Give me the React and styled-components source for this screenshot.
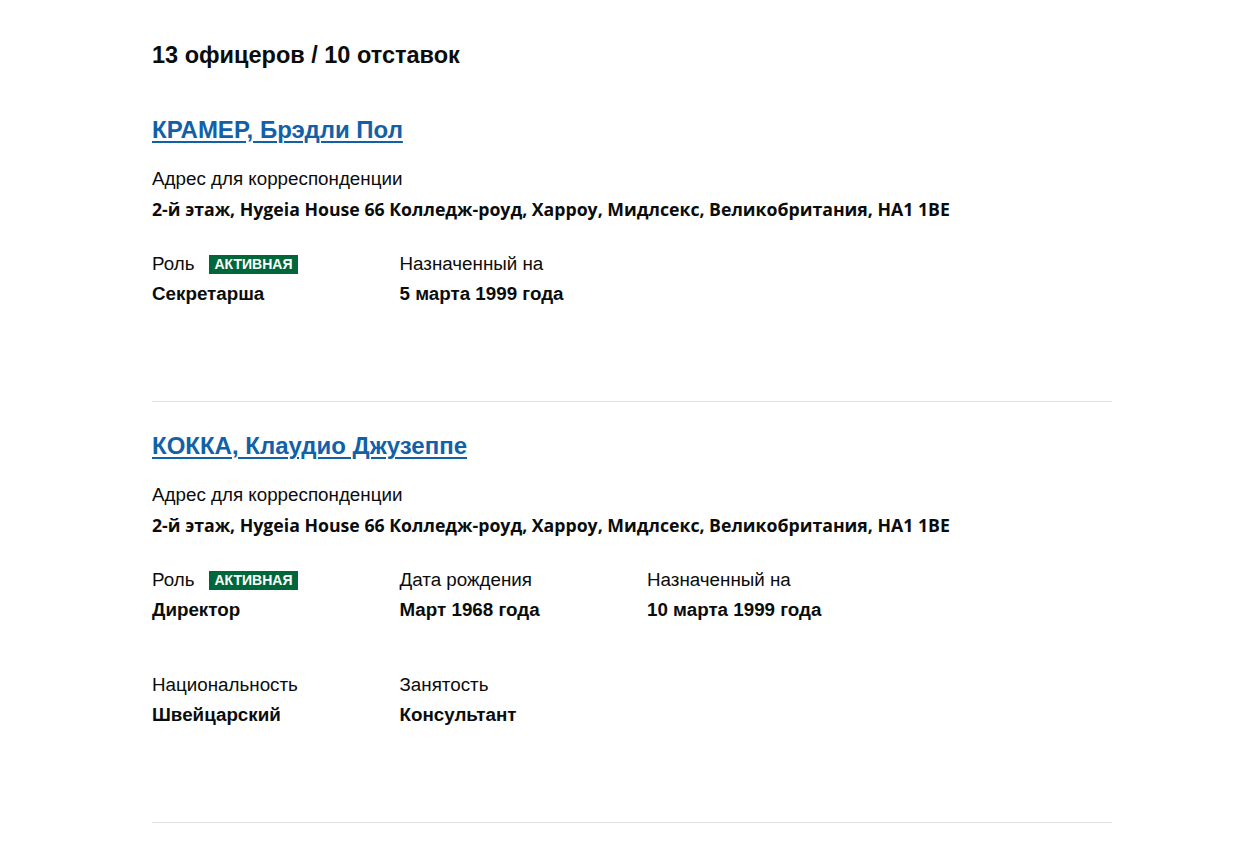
import React from 'react';
import styled, { createGlobalStyle } from 'styled-components';

const GlobalStyle = createGlobalStyle`
  body {
    margin: 0;
    background: #fff;
    color: #0b0c0c;
    font-family: "Liberation Sans", Arial, sans-serif;
  }
`;

const Page = styled.main`
  width: 960px;
  padding: 40px 0 0 152px;
`;

const Heading = styled.h2`
  margin: 0 0 45px;
  font-family: "Liberation Sans", Arial, sans-serif;
  font-size: 23.5px;
  font-weight: 700;
  line-height: 30px;
`;

const Officer = styled.section`
  padding-bottom: ${props => props.pad}px;
  border-bottom: 1px solid #e0e0e0;
  margin-bottom: 29px;
`;

const Name = styled.a`
  display: block;
  margin: 0 0 22px;
  font-size: 24px;
  font-weight: 700;
  line-height: 30px;
  color: #1261a8;
  text-decoration: underline;
  text-underline-offset: 3px;
  text-decoration-thickness: 2px;
`;

const Label = styled.div`
  display: flex;
  align-items: center;
  gap: 15px;
  font-size: 18.8px;
  line-height: 24px;
  color: #0b0c0c;
`;

const Value = styled.div`
  margin-top: 6px;
  font-size: 18.8px;
  font-weight: 700;
  line-height: 24px;
`;

const Address = styled(Value)`
  font-family: "Open Sans", "Liberation Sans", sans-serif;
  font-size: 17.7px;
`;

const Block = styled.div`
  margin-bottom: 31px;
`;

const Grid = styled.div`
  display: grid;
  grid-template-columns: repeat(3, 247.5px);
  row-gap: 51px;
`;

const Badge = styled.span`
  display: inline-block;
  background: #00673a;
  color: #fff;
  font-size: 14px;
  font-weight: 700;
  line-height: 19px;
  padding: 0 5px;
`;

const Field = ({ label, value, badge }) => (
  <div>
    <Label>
      {label}
      {badge && <Badge>{badge}</Badge>}
    </Label>
    <Value>{value}</Value>
  </div>
);

const ADDRESS = '2-й этаж, Hygeia House 66 Колледж-роуд, Харроу, Мидлсекс, Великобритания, HA1 1BE';

const officers = [
  {
    name: 'КРАМЕР, Брэдли Пол',
    pad: 95,
    fields: [
      { label: 'Роль', badge: 'Активная', value: 'Секретарша' },
      { label: 'Назначенный на', value: '5 марта 1999 года' },
    ],
  },
  {
    name: 'КОККА, Клаудио Джузеппе',
    pad: 95,
    fields: [
      { label: 'Роль', badge: 'Активная', value: 'Директор' },
      { label: 'Дата рождения', value: 'Март 1968 года' },
      { label: 'Назначенный на', value: '10 марта 1999 года' },
      { label: 'Национальность', value: 'Швейцарский' },
      { label: 'Занятость', value: 'Консультант' },
    ],
  },
];

const App = () => (
  <Page>
    <GlobalStyle />
    <Heading>13 офицеров / 10 отставок</Heading>
    {officers.map(officer => (
      <Officer key={officer.name} pad={officer.pad}>
        <Name href="#">{officer.name}</Name>
        <Block>
          <Label>Адрес для корреспонденции</Label>
          <Address>{ADDRESS}</Address>
        </Block>
        <Grid>
          {officer.fields.map(f => (
            <Field key={f.label} label={f.label} value={f.value} badge={f.badge && f.badge.toUpperCase()} />
          ))}
        </Grid>
      </Officer>
    ))}
  </Page>
);

export default App;
